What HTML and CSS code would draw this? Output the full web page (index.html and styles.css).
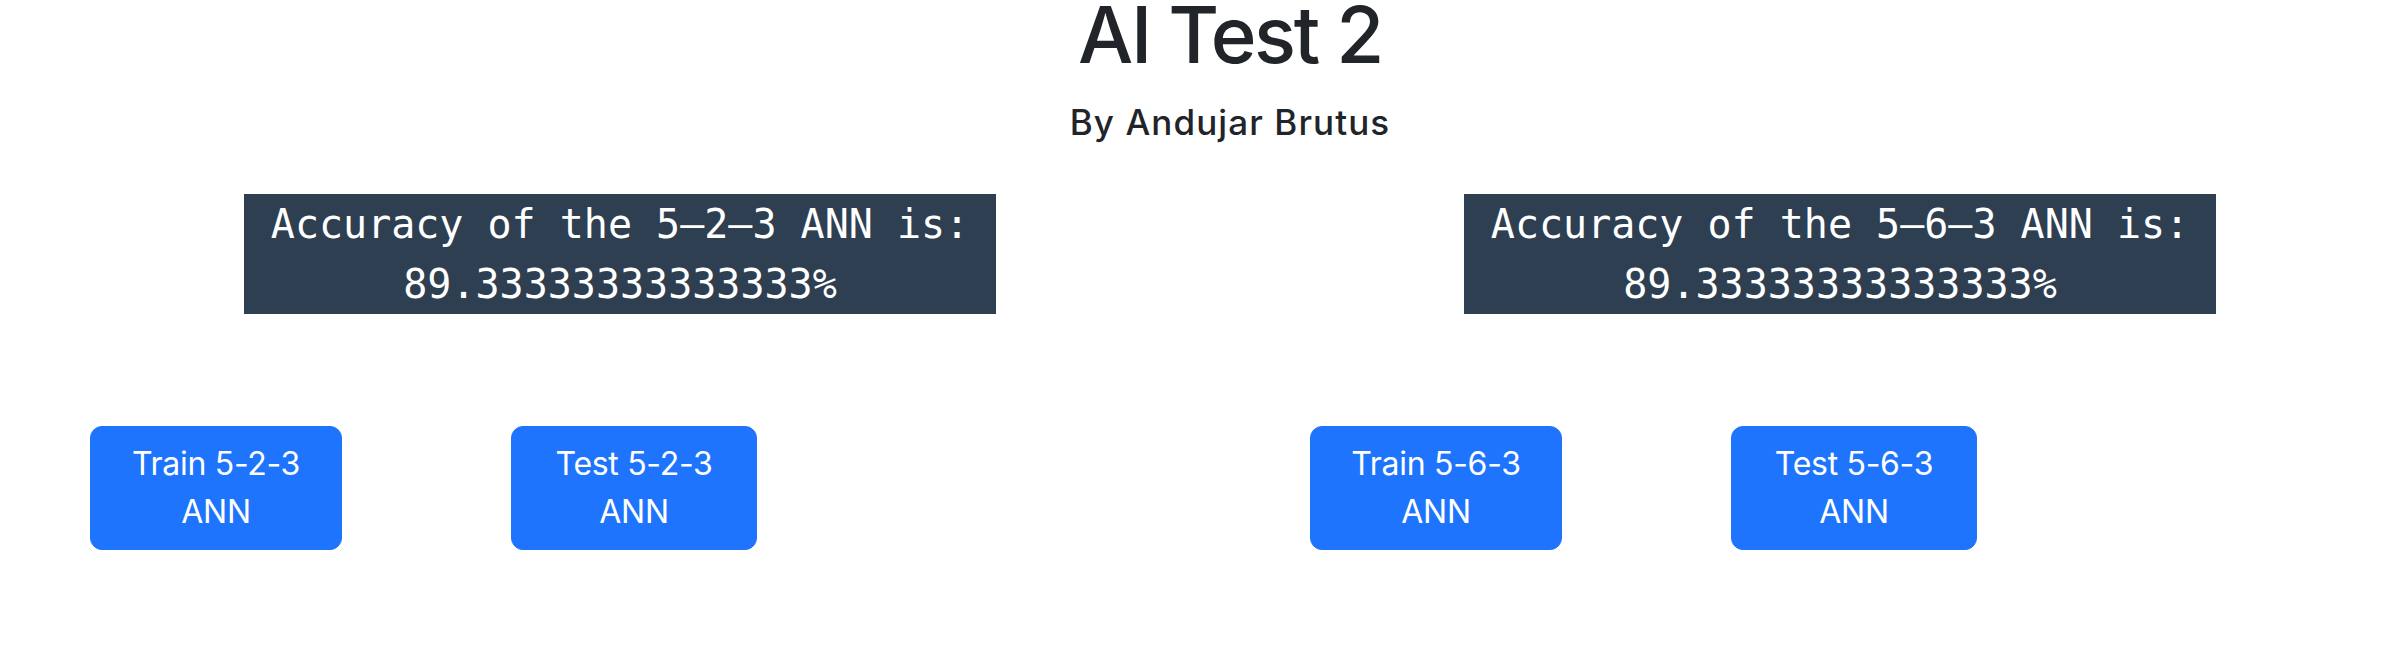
FILE: index.html
```html
<!DOCTYPE html>
<html lang="en">
<head>
<meta charset="utf-8">
<title>AI Test 2</title>
<link rel="stylesheet" href="styles.css">
</head>
<body>
<div class="page">
  <header class="header">
    <h1 class="title">AI Test 2</h1>
    <h2 class="subtitle">By Andujar Brutus</h2>
  </header>
  <main class="results">
    <section class="model">
      <div class="accuracy">Accuracy of the 5–2–3 ANN is:<br>89.33333333333333%</div>
      <div class="actions">
        <button class="btn btn-train">Train 5-2-3 ANN</button>
        <button class="btn btn-test">Test 5-2-3 ANN</button>
      </div>
    </section>
    <section class="model">
      <div class="accuracy">Accuracy of the 5–6–3 ANN is:<br>89.33333333333333%</div>
      <div class="actions">
        <button class="btn btn-train">Train 5-6-3 ANN</button>
        <button class="btn btn-test">Test 5-6-3 ANN</button>
      </div>
    </section>
  </main>
</div>
</body>
</html>
```

FILE: styles.css
```css
html, body {
  margin: 0;
  padding: 0;
  background: #ffffff;
  overflow: hidden;
}

.page {
  width: 2460px;
  font-family: Inter, "Noto Sans", "Liberation Sans", sans-serif;
  color: #212529;
}

.header {
  display: flex;
  flex-direction: column;
  align-items: center;
}

.title {
  margin: 0;
  font-size: 78px;
  font-weight: 500;
  line-height: 0.9;
  letter-spacing: -2.4px;
}

.subtitle {
  margin: 32px 0 0;
  font-size: 35px;
  font-weight: 500;
  line-height: 40px;
  letter-spacing: 1.1px;
}

.results {
  display: flex;
  padding: 0 10px;
}

.model {
  width: 1220px;
  display: flex;
  flex-direction: column;
}

.accuracy {
  align-self: center;
  width: 752px;
  margin-top: 52px;
  background: #2e3f52;
  color: #ffffff;
  font-family: "DejaVu Sans Mono", "Liberation Mono", monospace;
  font-size: 40px;
  line-height: 60px;
  text-align: center;
}

.actions {
  display: flex;
  gap: 169px;
  margin-top: 112px;
  padding-left: 80px;
}

.btn {
  font-family: Inter, "Noto Sans", "Liberation Sans", sans-serif;
  font-size: 32px;
  line-height: 48px;
  letter-spacing: -0.3px;
  padding: 13px 26px;
  border: 1px solid #1e74fd;
  border-radius: 12px;
  background: #1e74fd;
  color: #ffffff;
  text-align: center;
  cursor: pointer;
}

.btn-train {
  width: 252px;
}

.btn-test {
  width: 246px;
}
```
